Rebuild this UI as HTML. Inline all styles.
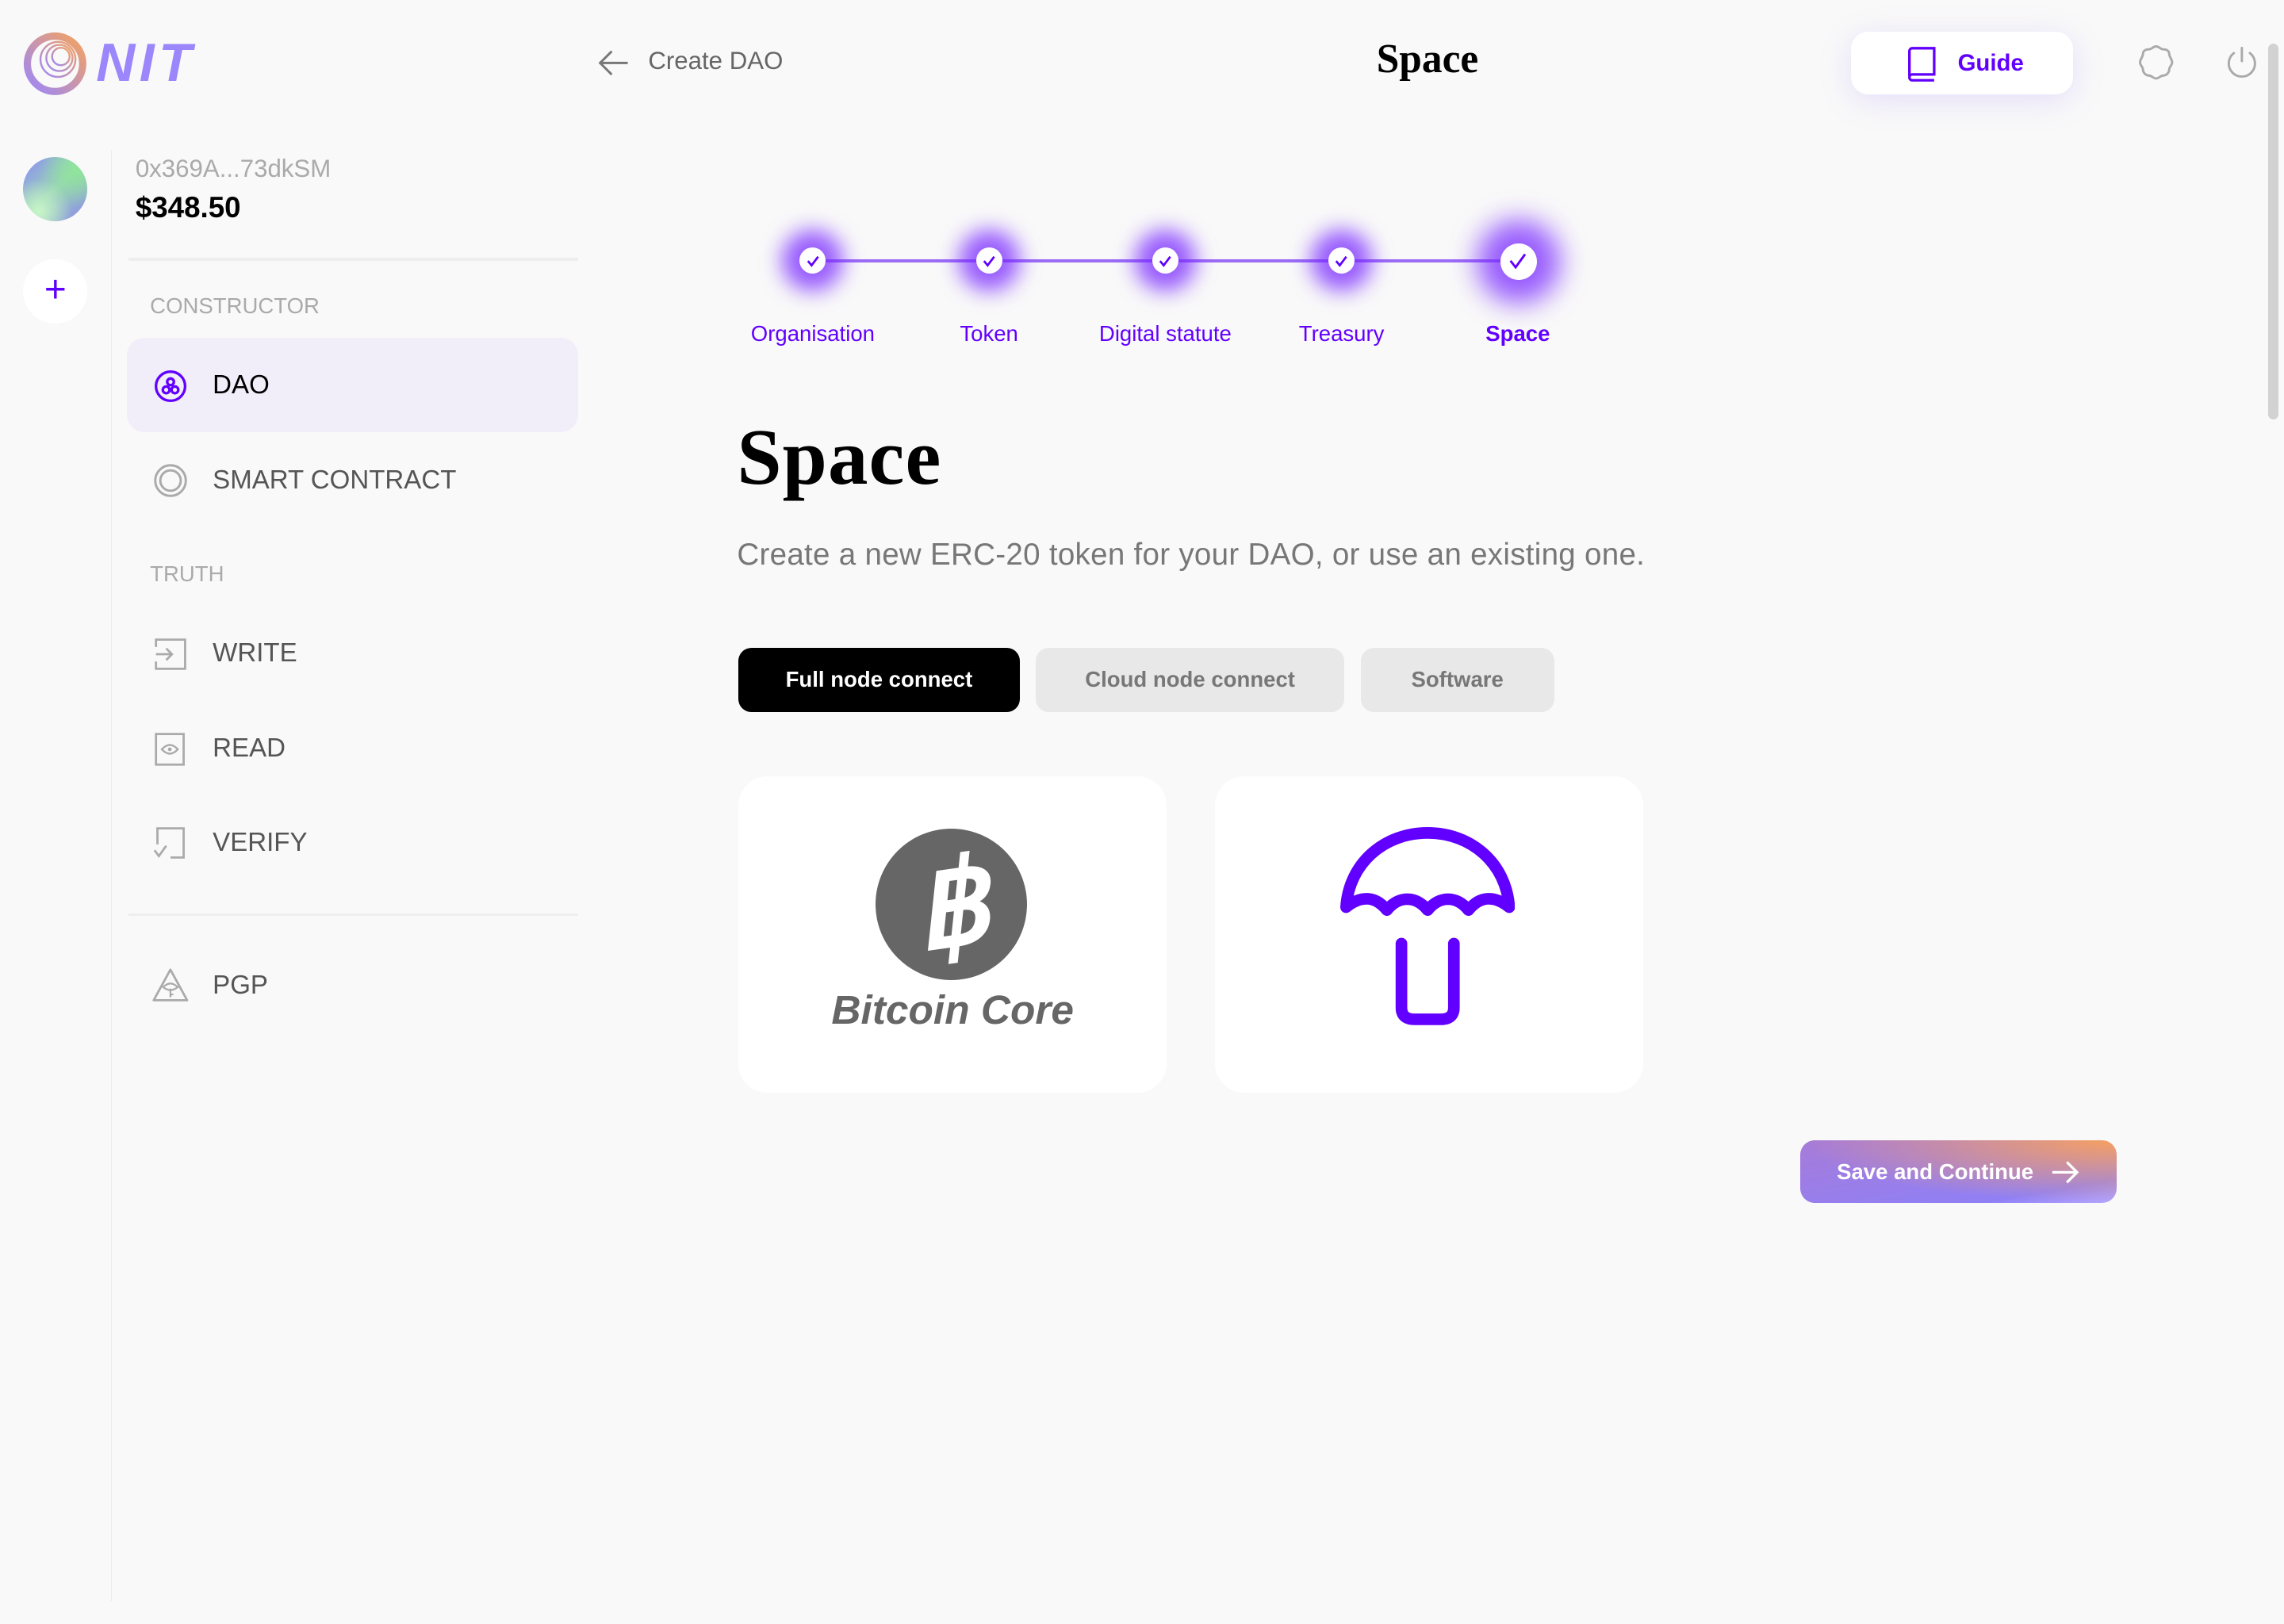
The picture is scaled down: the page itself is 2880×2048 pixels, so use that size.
<!DOCTYPE html>
<html><head><meta charset="utf-8"><style>
html,body{margin:0;padding:0;background:#f9f9f9;}
body{width:2880px;height:2048px;overflow:hidden;}
#r{zoom:1.83673;width:1568px;height:1115px;position:relative;font-family:"Liberation Sans",sans-serif;}
.a{position:absolute;}
.t{white-space:nowrap;}
.nav{position:absolute;left:146px;font-size:18px;color:#555;line-height:20px;}
.sec{position:absolute;left:103px;font-size:15px;color:#aaa;line-height:16px;}
.st{position:absolute;top:170px;width:18px;height:18px;border-radius:50%;background:#fff;box-shadow:0 0 14px 12px rgba(120,40,255,.75);}
.sl{position:absolute;top:220px;font-size:15px;color:#6200ff;width:140px;text-align:center;line-height:18px;}
.tab{position:absolute;top:445px;height:44px;border-radius:9px;font-size:15px;font-weight:bold;line-height:44px;text-align:center;}
.card{position:absolute;top:533px;width:294px;height:217px;background:#fff;border-radius:20px;}
</style></head><body><div id="r">
<svg class="a" style="left:16px;top:22px" width="44" height="44" viewBox="0 0 44 44">
<defs><linearGradient id="lg" x1="0" y1="1" x2="1" y2="0"><stop offset="0" stop-color="#9b87fb"/><stop offset="1" stop-color="#f5a35f"/></linearGradient></defs>
<ellipse cx="22" cy="22" rx="19" ry="19" fill="none" stroke="url(#lg)" stroke-width="5"/>
<g fill="none" stroke="url(#lg)" stroke-width="1.3"><circle cx="24" cy="19" r="12"/><circle cx="25" cy="18" r="9"/><circle cx="26" cy="17" r="6"/></g></svg>
<div class="a t" style="left:66px;top:21px;font-size:37px;font-weight:bold;font-style:italic;color:#9b87fb;letter-spacing:3px;line-height:44px">NIT</div>
<svg class="a" style="left:410px;top:33px" width="22" height="20" viewBox="0 0 22 20"><path d="M21 10H2M10 2 2 10l8 8" fill="none" stroke="#777" stroke-width="1.6"/></svg>
<div class="a t" style="left:445px;top:32px;font-size:17px;color:#666;line-height:20px">Create DAO</div>
<div class="a t" style="left:880px;width:200px;text-align:center;top:24px;font-family:'Liberation Serif',serif;font-weight:bold;font-size:28px;line-height:34px">Space</div>
<div class="a" style="left:1271px;top:22px;width:152px;height:43px;background:#fff;border-radius:12px;box-shadow:0 4px 22px rgba(140,100,255,.18)"></div>
<svg class="a" style="left:1309px;top:32px" width="22" height="24" viewBox="0 0 22 24"><path d="M2 20V3a2 2 0 0 1 2-2h15v18H4a2 2 0 0 0-2 2 2 2 0 0 0 2 2h15" fill="none" stroke="#6200ff" stroke-width="1.8"/></svg>
<div class="a t" style="left:1344px;top:34px;font-size:16px;font-weight:bold;color:#6200ff;line-height:20px">Guide</div>
<svg class="a" style="left:1466px;top:29px" width="28" height="28" viewBox="0 0 28 28"><path d="M14 3c2 0 3 2 5 2s4 1 4 3 2 4 2 6-2 3-2 5-2 4-4 4-3 2-5 2-3-2-5-2-4-2-4-4-2-3-2-5 2-4 2-6 2-3 4-3 3-2 5-2z" fill="none" stroke="#aaa" stroke-width="1.6"/></svg>
<svg class="a" style="left:1526px;top:30px" width="26" height="26" viewBox="0 0 26 26"><path d="M13 3v9M7.5 6.5a9 9 0 1 0 11 0" fill="none" stroke="#aaa" stroke-width="1.6" stroke-linecap="round"/></svg>
<div class="a" style="left:1557px;top:30px;width:7px;height:258px;border-radius:4px;background:#d2d2d2"></div>
<div class="a" style="left:76px;top:103px;width:1px;height:996px;background:#ececec"></div>
<div class="a" style="left:16px;top:108px;width:44px;height:44px;border-radius:50%;background:radial-gradient(circle at 25% 85%,#c8f5c8 0,transparent 45%),radial-gradient(circle at 85% 20%,#8fe59a 0,transparent 50%),linear-gradient(135deg,#8a8af5,#9ad4b8 50%,#8a85ee)"></div>
<div class="a" style="left:16px;top:178px;width:44px;height:44px;border-radius:50%;background:#fff;color:#6200ff;font-size:26px;text-align:center;line-height:42px">+</div>
<div class="a t" style="left:93px;top:106px;font-size:17px;color:#aaa;line-height:20px">0x369A...73dkSM</div>
<div class="a t" style="left:93px;top:132px;font-size:20px;font-weight:bold;color:#000;line-height:22px">$348.50</div>
<div class="a" style="left:88px;top:177px;width:309px;height:2px;background:#eee"></div>
<div class="sec t" style="top:202px">CONSTRUCTOR</div>
<div class="a" style="left:87px;top:232px;width:310px;height:65px;border-radius:12px;background:#f1eefa"></div>
<svg class="a" style="left:105px;top:253px" width="24" height="24" viewBox="0 0 24 24"><g fill="none" stroke="#6200ff" stroke-width="1.8"><circle cx="12" cy="12" r="10"/><circle cx="12" cy="9" r="2.3"/><circle cx="9" cy="14.5" r="2.3"/><circle cx="15" cy="14.5" r="2.3"/></g></svg>
<div class="nav t" style="top:255px;color:#000">DAO</div>
<svg class="a" style="left:105px;top:318px" width="24" height="24" viewBox="0 0 24 24"><g fill="none" stroke="#aaa" stroke-width="1.6"><circle cx="12" cy="12" r="10.5"/><circle cx="12" cy="12" r="7"/></g></svg>
<div class="nav t" style="top:320px">SMART CONTRACT</div>
<div class="sec t" style="top:386px">TRUTH</div>
<svg class="a" style="left:105px;top:437px" width="24" height="24" viewBox="0 0 24 24"><path d="M2 7V2h20v20H2v-5M2 12h11M9 8l4 4-4 4" fill="none" stroke="#aaa" stroke-width="1.5"/></svg>
<div class="nav t" style="top:439px">WRITE</div>
<svg class="a" style="left:105px;top:502px" width="24" height="24" viewBox="0 0 24 24"><rect x="2" y="2" width="19" height="21" fill="none" stroke="#aaa" stroke-width="1.5"/><path d="M6 12.5q5.5-6 11 0q-5.5 6-11 0z" fill="none" stroke="#aaa" stroke-width="1.3"/><circle cx="11.5" cy="12.5" r="1.3" fill="#aaa"/></svg>
<div class="nav t" style="top:504px">READ</div>
<svg class="a" style="left:105px;top:567px" width="24" height="24" viewBox="0 0 24 24"><path d="M3 13V2h18v20h-9M1 17l3 4 5-7" fill="none" stroke="#aaa" stroke-width="1.5"/></svg>
<div class="nav t" style="top:569px">VERIFY</div>
<div class="a" style="left:88px;top:627px;width:309px;height:2px;background:#eee"></div>
<svg class="a" style="left:104px;top:665px" width="26" height="24" viewBox="0 0 26 24"><path d="M13 1 1.5 22h23z" fill="none" stroke="#aaa" stroke-width="1.5" stroke-linejoin="round"/><path d="M8 13q5-5 10 0q-5 4-10 0z" fill="none" stroke="#aaa" stroke-width="1.2"/><path d="M13 14v6M13 18h2" stroke="#aaa" stroke-width="1.2"/></svg>
<div class="nav t" style="top:667px">PGP</div>
<div class="a" style="left:558px;top:178px;width:484px;height:2px;background:#9b6cf5"></div>
<div class="st" style="left:549px"></div><div class="st" style="left:670px"></div><div class="st" style="left:791px"></div><div class="st" style="left:912px"></div>
<div class="st" style="left:1030px;top:167px;width:25px;height:25px;box-shadow:0 0 18px 16px rgba(120,40,255,.75)"></div>
<svg class="a" style="left:553px;top:174px" width="10" height="10" viewBox="0 0 10 10"><path d="M1.5 5l2.5 3 4.5-6" fill="none" stroke="#6200ff" stroke-width="1.5"/></svg>
<svg class="a" style="left:674px;top:174px" width="10" height="10" viewBox="0 0 10 10"><path d="M1.5 5l2.5 3 4.5-6" fill="none" stroke="#6200ff" stroke-width="1.5"/></svg>
<svg class="a" style="left:795px;top:174px" width="10" height="10" viewBox="0 0 10 10"><path d="M1.5 5l2.5 3 4.5-6" fill="none" stroke="#6200ff" stroke-width="1.5"/></svg>
<svg class="a" style="left:916px;top:174px" width="10" height="10" viewBox="0 0 10 10"><path d="M1.5 5l2.5 3 4.5-6" fill="none" stroke="#6200ff" stroke-width="1.5"/></svg>
<svg class="a" style="left:1035px;top:172px" width="14" height="14" viewBox="0 0 14 14"><path d="M2 7l3.5 4.5 6.5-9" fill="none" stroke="#6200ff" stroke-width="1.6"/></svg>
<div class="sl t" style="left:488px">Organisation</div>
<div class="sl t" style="left:609px">Token</div>
<div class="sl t" style="left:730px">Digital statute</div>
<div class="sl t" style="left:851px">Treasury</div>
<div class="sl t" style="left:972px;font-weight:bold">Space</div>
<div class="a t" style="left:506px;top:281px;font-family:'Liberation Serif',serif;font-weight:bold;font-size:55px;letter-spacing:0.6px;line-height:66px;color:#000">Space</div>
<div class="a t" style="left:506px;top:368px;font-size:21px;color:#777;line-height:26px;letter-spacing:0.15px">Create a new ERC-20 token for your DAO, or use an existing one.</div>
<div class="tab t" style="left:507px;width:193px;background:#000;color:#fff">Full node connect</div>
<div class="tab t" style="left:711px;width:212px;background:#e8e8e8;color:#777">Cloud node connect</div>
<div class="tab t" style="left:934px;width:133px;background:#e8e8e8;color:#777">Software</div>
<div class="card" style="left:507px"></div>
<div class="card" style="left:834px"></div>
<div class="a" style="left:601px;top:569px;width:104px;height:104px;border-radius:50%;background:#666"></div>
<div class="a t" style="left:601px;top:577px;width:104px;text-align:center;color:#fff;font-size:80px;font-weight:bold;font-style:italic;line-height:90px;transform:rotate(-8deg)">&#x0E3F;</div>
<div class="a t" style="left:507px;width:294px;text-align:center;top:676px;font-size:28px;font-weight:bold;font-style:italic;color:#666;line-height:34px">Bitcoin Core</div>
<svg class="a" style="left:920px;top:568px" width="120" height="136" viewBox="0 0 120 136">
<path d="M4 55C6 25 30 4 60 4s54 21 56 51c-10-8-20-8-28 2-8-10-20-10-28 0-8-10-20-10-28 0-8-10-18-10-28-2z" fill="none" stroke="#6200ff" stroke-width="8" stroke-linejoin="round"/>
<path d="M42 80v44q0 8 9 8h18q9 0 9-8V80" fill="none" stroke="#6200ff" stroke-width="8" stroke-linecap="round"/>
</svg>
<div class="a" style="left:1236px;top:783px;width:217px;height:43px;border-radius:10px;background:radial-gradient(ellipse at 100% 0%,#f6a061 0,transparent 70%),linear-gradient(170deg,#a77bd8,#9080f5 80%,#b7a8ff)"></div>
<div class="a t" style="left:1261px;top:795px;font-size:15px;font-weight:bold;color:#fff;line-height:20px">Save and Continue</div>
<svg class="a" style="left:1408px;top:795px" width="20" height="20" viewBox="0 0 20 20"><path d="M1 10h17M11 3l7 7-7 7" fill="none" stroke="#fff" stroke-width="1.8"/></svg>
</div></body></html>
